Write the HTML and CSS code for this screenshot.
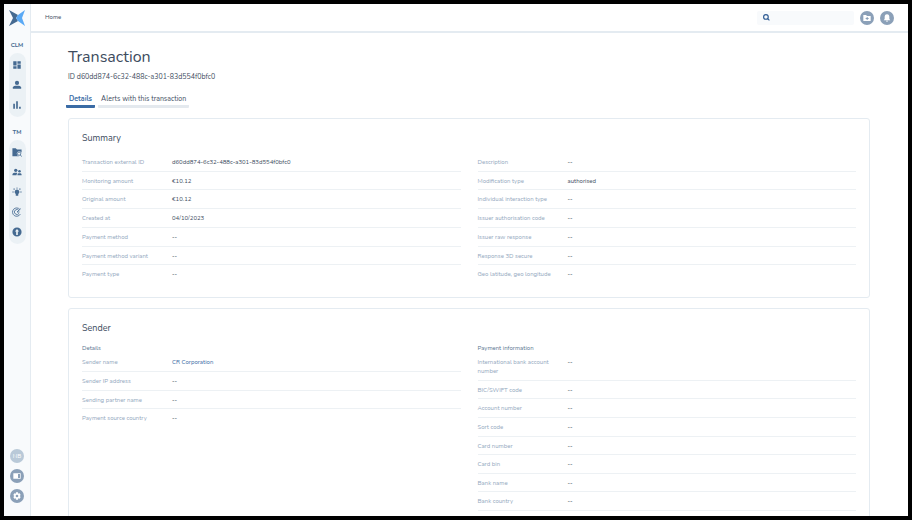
FILE: index.html
```html
<!DOCTYPE html>
<html lang="en">
<head>
  <meta charset="UTF-8" />
  <meta name="viewport" content="width=device-width, initial-scale=1.0"/>
  <title>Transaction</title>
  <link rel="stylesheet" href="styles.css">
</head>
<body>
  <div class="app">
    <aside class="sidebar">
      <a href="#" class="logo" aria-label="Home">
        <svg viewBox="0 0 16 16">
          <path fill="#456a91" d="M0 0 L9 5 L7 8 L9 11 L0 16 L4 8 Z"/>
          <path fill="#5aa9f5" d="M16 0 L9 5 L7 8 L9 11 L16 16 L13 8 Z"/>
        </svg>
      </a>

      <h2 class="nav-title">CLM</h2>
      <nav class="nav" aria-label="CLM">
        <a href="#" aria-label="Dashboard">
          <svg viewBox="0 0 24 24"><path d="M3 3h8v10H3zM3 15h8v6H3zM13 3h8v6h-8zM13 11h8v10h-8z"/></svg>
        </a>
        <a href="#" aria-label="Customers">
          <svg viewBox="0 0 24 24"><circle cx="12" cy="7" r="5"/><path d="M2 21v-3c0-3 5-4 10-4s10 1 10 4v3z"/></svg>
        </a>
        <a href="#" aria-label="Reports">
          <svg viewBox="0 0 24 24"><path d="M3 9h4v12H3zM10 3h4v18h-4zM17 16h4v5h-4z"/></svg>
        </a>
      </nav>

      <h2 class="nav-title">TM</h2>
      <nav class="nav" aria-label="TM">
        <a href="#" aria-label="Cases">
          <svg viewBox="0 0 24 24"><path d="M1 3h8l3 3h11v8a6 6 0 1 0-6 8H1z"/><path class="line" d="M20 19l3 4"/><circle class="line" cx="17" cy="16" r="4"/></svg>
        </a>
        <a href="#" aria-label="Groups">
          <svg viewBox="0 0 24 24"><circle cx="9" cy="8" r="4"/><circle cx="18" cy="10" r="3"/><path d="M1 20v-2c0-3 4-4 8-4 2 0 3 0 4 1-1 1-2 2-2 5zM13 20v-1c0-3 2-4 5-4s5 1 5 3v2z"/></svg>
        </a>
        <a href="#" aria-label="Insights">
          <svg viewBox="0 0 24 24"><path d="M12 6a6 6 0 0 1 3 11v4H9v-4a6 6 0 0 1 3-11zM11 1h2v3h-2zM1 11h3v2H1zM20 11h3v2h-3zM3 5l2-2 2 2-2 2zM17 5l2-2 2 2-2 2z"/></svg>
        </a>
        <a href="#" aria-label="Rules">
          <svg viewBox="0 0 24 24"><path class="line" d="M20 17a10 10 0 1 1-1-11M17 15a6 6 0 1 1 0-6M12 12l9-8M12 12h6"/></svg>
        </a>
        <a href="#" aria-label="Uploads">
          <svg viewBox="0 0 24 24"><path fill-rule="evenodd" d="M12 1a11 11 0 1 0 0 22 11 11 0 0 0 0-22zM12 5l5 6h-3v8h-4v-8H7z"/></svg>
        </a>
      </nav>

      <div class="sidebar-bottom">
        <button type="button" class="round avatar">NB</button>
        <button type="button" class="round" aria-label="Toggle panel">
          <svg viewBox="0 0 24 24"><path fill-rule="evenodd" d="M1 4h22v16H1zM15 6v12h6V6z"/></svg>
        </button>
        <button type="button" class="round" aria-label="Settings">
          <svg viewBox="0 0 24 24"><path fill-rule="evenodd" d="M9 1h6l1 4 4-1 3 5-3 3 3 3-3 5-4-1-1 4H9l-1-4-4 1-3-5 3-3-3-3 3-5 4 1zM12 8a4 4 0 1 0 0 8 4 4 0 0 0 0-8z"/></svg>
        </button>
      </div>
    </aside>

    <div class="content">
      <header class="top-bar">
        <a href="#" class="breadcrumb">Home</a>
        <label class="search">
          <svg viewBox="0 0 24 24"><circle cx="10" cy="10" r="8"/><path d="M16 16l6 6"/></svg>
          <input type="search" aria-label="Search">
        </label>
        <button type="button" class="round" aria-label="New case">
          <svg viewBox="0 0 24 24"><path fill-rule="evenodd" d="M1 3h8l3 3h11v15H1zM11 9v3H8v3h3v3h3v-3h3v-3h-3V9z"/></svg>
        </button>
        <button type="button" class="round" aria-label="Notifications">
          <svg viewBox="0 0 24 24"><path d="M12 1c5 0 7 4 7 8v6l3 4H2l3-4V9c0-4 2-8 7-8zM9 20h6a3 3 0 0 1-6 0z"/></svg>
        </button>
      </header>

      <main class="main">
        <h1>Transaction</h1>
        <p class="transaction-id">ID d60dd874-6c32-488c-a301-83d554f0bfc0</p>

        <nav class="tabs">
          <a href="#" class="active">Details</a>
          <a href="#">Alerts with this transaction</a>
        </nav>

        <section class="card">
          <h2>Summary</h2>
          <div class="columns">
            <dl class="list rows-7">
              <div class="row"><dt>Transaction external ID</dt><dd>d60dd874-6c32-488c-a301-83d554f0bfc0</dd></div>
              <div class="row"><dt>Monitoring amount</dt><dd>€10.12</dd></div>
              <div class="row"><dt>Original amount</dt><dd>€10.12</dd></div>
              <div class="row"><dt>Created at</dt><dd>04/10/2023</dd></div>
              <div class="row"><dt>Payment method</dt><dd>--</dd></div>
              <div class="row"><dt>Payment method variant</dt><dd>--</dd></div>
              <div class="row"><dt>Payment type</dt><dd>--</dd></div>
            </dl>
            <dl class="list rows-7">
              <div class="row"><dt>Description</dt><dd>--</dd></div>
              <div class="row"><dt>Modification type</dt><dd>authorised</dd></div>
              <div class="row"><dt>Individual interaction type</dt><dd>--</dd></div>
              <div class="row"><dt>Issuer authorisation code</dt><dd>--</dd></div>
              <div class="row"><dt>Issuer raw response</dt><dd>--</dd></div>
              <div class="row"><dt>Response 3D secure</dt><dd>--</dd></div>
              <div class="row"><dt>Geo latitude, geo longitude</dt><dd>--</dd></div>
            </dl>
          </div>
        </section>

        <section class="card">
          <h2>Sender</h2>
          <div class="columns">
            <div>
              <h3>Details</h3>
              <dl class="list rows-4">
                <div class="row"><dt>Sender name</dt><dd><a href="#">CR Corporation</a></dd></div>
                <div class="row"><dt>Sender IP address</dt><dd>--</dd></div>
                <div class="row"><dt>Sending partner name</dt><dd>--</dd></div>
                <div class="row"><dt>Payment source country</dt><dd>--</dd></div>
              </dl>
            </div>
            <div>
              <h3>Payment information</h3>
              <dl class="list rows-8">
                <div class="row"><dt>International bank account number</dt><dd>--</dd></div>
                <div class="row"><dt>BIC/SWIFT code</dt><dd>--</dd></div>
                <div class="row"><dt>Account number</dt><dd>--</dd></div>
                <div class="row"><dt>Sort code</dt><dd>--</dd></div>
                <div class="row"><dt>Card number</dt><dd>--</dd></div>
                <div class="row"><dt>Card bin</dt><dd>--</dd></div>
                <div class="row"><dt>Bank name</dt><dd>--</dd></div>
                <div class="row ruled"><dt>Bank country</dt><dd>--</dd></div>
              </dl>
            </div>
          </div>
        </section>
      </main>
    </div>
  </div>
</body>
</html>
```
FILE: styles.css
```css
* {
  box-sizing: border-box;
  margin: 0;
  padding: 0;
}

body {
  font-family: Nunito, Lato, sans-serif;
  font-size: 6px;
  line-height: 9px;
  color: #3d4c5e;
  background-color: #fff;
}

a {
  color: inherit;
  text-decoration: none;
}

svg {
  display: block;
}

.app {
  display: flex;
  height: 100vh;
  border: 4px solid #000;
  overflow: hidden;
}

/* Sidebar */
.sidebar {
  display: flex;
  flex-direction: column;
  align-items: center;
  width: 27px;
  padding: 6px 0 13px;
  background-color: #f8fafc;
  border-right: 1px solid #e4ebf1;
}

.logo svg {
  width: 16px;
  height: 16px;
}

.nav-title {
  margin: 15px 0 3px;
  font-size: 6px;
  font-weight: bold;
  color: #456a91;
}

.nav {
  padding: 2px 0;
  background-color: #ebf1f5;
  border-radius: 9px;
}

.nav + .nav-title {
  margin-top: 11px;
}

.nav a {
  display: flex;
  align-items: center;
  justify-content: center;
  width: 17px;
  height: 20px;
}

.nav svg {
  width: 10px;
  height: 10px;
  fill: #456a91;
}

.nav .line {
  fill: none;
  stroke: #456a91;
  stroke-width: 2;
}

.sidebar-bottom {
  display: flex;
  flex-direction: column;
  gap: 6px;
  margin-top: auto;
}

.round {
  display: flex;
  align-items: center;
  justify-content: center;
  width: 14px;
  height: 14px;
  font: inherit;
  color: #fff;
  background-color: #8ba0b8;
  border: none;
  border-radius: 50%;
  cursor: pointer;
}

.round svg {
  width: 8px;
  height: 8px;
  fill: #fff;
}

.avatar {
  background-color: #b9c9d8;
}

/* Top bar */
.content {
  flex: 1;
  min-width: 0;
}

.top-bar {
  display: flex;
  align-items: center;
  gap: 6px;
  height: 29px;
  padding: 0 14px;
  border-bottom: 2px solid #e4ebf1;
}

.breadcrumb {
  margin-right: auto;
}

.search {
  display: flex;
  align-items: center;
  width: 97px;
  height: 14px;
  padding: 0 6px;
  background-color: #f8fafc;
  border-radius: 2px;
}

.search svg {
  flex: none;
  width: 7px;
  height: 7px;
  fill: none;
  stroke: #2f5c94;
  stroke-width: 4;
}

.search input {
  width: 100%;
  font: inherit;
  background: none;
  border: none;
  outline: none;
}

/* Page */
.main {
  padding: 15px 38px 0 37px;
}

h1 {
  font-size: 16px;
  font-weight: normal;
  line-height: 19px;
}

.transaction-id {
  margin-top: 5px;
  font-size: 7px;
}

.tabs {
  display: flex;
  gap: 3px;
  margin: 13px 0 10px -2px;
}

.tabs a {
  padding: 0 3px 2px;
  font-size: 7px;
  border-bottom: 3px solid #e4e9ee;
  border-radius: 1px;
}

.tabs .active {
  font-weight: bold;
  color: #3a6ba5;
  border-bottom-color: #3a6ba5;
}

.card {
  margin-bottom: 10px;
  padding: 13px;
  border: 1px solid #e4ebf1;
  border-radius: 3px;
}

.card h2 {
  margin-bottom: 9px;
  font-size: 9px;
  font-weight: normal;
  line-height: 12px;
}

.card h3 {
  font-size: 6px;
  font-weight: normal;
  line-height: 10px;
  color: #5b7591;
}

.columns {
  display: grid;
  grid-template-columns: 1fr 1fr;
  gap: 17px;
}

/* Rows share the height of the list evenly */
.list {
  display: flex;
  flex-direction: column;
}

.rows-4 {
  min-height: 75px;
}

.rows-7 {
  min-height: 131px;
}

.rows-8 {
  min-height: 158px;
}

.row {
  display: grid;
  grid-template-columns: 80px 1fr;
  gap: 10px;
  flex: 1 0 auto;
  padding: 5px 0 3px;
  border-bottom: 1px solid #edf1f4;
}

.row:last-child {
  border-bottom-color: transparent;
}

.row.ruled {
  border-bottom-color: #edf1f4;
}

dt {
  color: #93a8be;
}

dd a {
  color: #3a6ba5;
}
```
